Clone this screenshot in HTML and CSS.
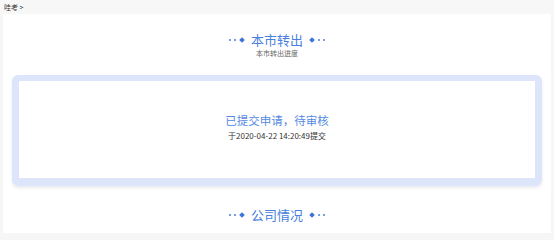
FILE: index.html
```html
<!DOCTYPE html>
<html lang="zh">
<head>
<meta charset="utf-8">
<title>本市转出</title>
<link rel="stylesheet" href="styles.css">
</head>
<body>
<div class="topbar">哇考 &gt;</div>
<main class="main">
  <section class="section">
    <h2 class="sec-title"><span class="deco"><i class="dot"></i><i class="dot"></i><i class="dia"></i></span>本市转出<span class="deco"><i class="dia"></i><i class="dot"></i><i class="dot"></i></span></h2>
    <p class="sec-sub">本市转出进度</p>
    <div class="card">
      <div class="card-inner">
        <p class="status">已提交申请，待审核</p>
        <p class="time">于2020-04-22 14:20:49提交</p>
      </div>
    </div>
  </section>
  <section class="section next">
    <h2 class="sec-title"><span class="deco"><i class="dot"></i><i class="dot"></i><i class="dia"></i></span>公司情况<span class="deco"><i class="dia"></i><i class="dot"></i><i class="dot"></i></span></h2>
  </section>
</main>
</body>
</html>
```
FILE: styles.css
```css
html, body {
  margin: 0;
  padding: 0;
}
body {
  background: #f6f6f6;
  font-family: "Noto Sans CJK SC", "Liberation Sans", sans-serif;
}
.topbar {
  height: 14px;
  line-height: 14px;
  font-size: 7px;
  color: #333;
  padding-left: 4px;
  background: #f7f7f7;
}
.main {
  background: #fff;
  margin: 0 3px;
  padding: 17px 0 10px;
}
.sec-title {
  margin: 0;
  text-align: center;
  font-size: 13px;
  line-height: 17px;
  font-weight: normal;
  color: #4a7fdc;
  display: flex;
  justify-content: center;
  align-items: center;
  gap: 6px;
}
.deco {
  display: inline-flex;
  align-items: center;
  gap: 3px;
}
.dot {
  display: block;
  width: 2px;
  height: 2px;
  border-radius: 50%;
  background: #4a7fdc;
}
.dia {
  display: block;
  width: 4px;
  height: 4px;
  background: #3f73d6;
  transform: rotate(45deg);
  margin: 0 1px;
}
.sec-sub {
  margin: 0;
  text-align: center;
  font-size: 7px;
  line-height: 10px;
  color: #666;
}
.card {
  margin: 17px 9px 0;
  border-style: solid;
  border-color: #dce5f9;
  border-width: 6px 7px 8px;
  border-radius: 6px;
  box-shadow: 0 2px 3px rgba(200, 200, 215, 0.35);
}
.card-inner {
  background: #fff;
  border-radius: 4px;
  height: 97px;
  text-align: center;
  padding-top: 30px;
  box-sizing: border-box;
}
.status {
  margin: 0;
  font-size: 11.5px;
  line-height: 18px;
  color: #5589e3;
}
.time {
  margin: 1px 0 0;
  font-size: 8px;
  line-height: 12px;
  color: #333;
}
.next {
  margin-top: 20px;
}
```
